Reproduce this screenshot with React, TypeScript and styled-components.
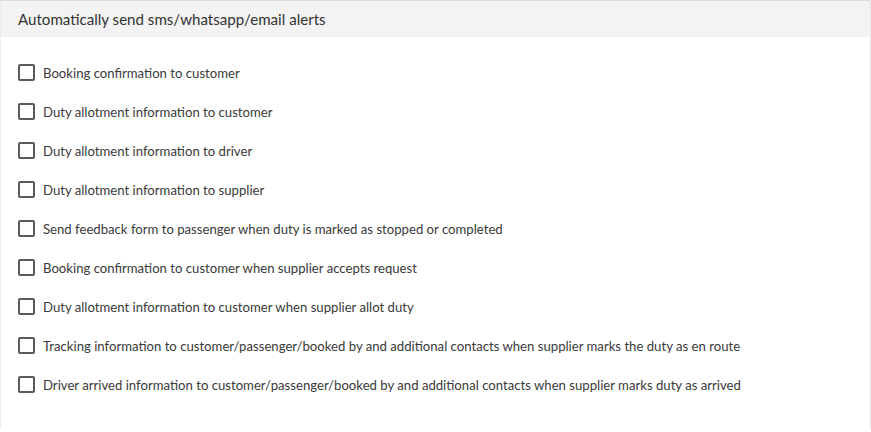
import React from "react";
import styled, { createGlobalStyle } from "styled-components";

const Global = createGlobalStyle`
  html, body { margin: 0; padding: 0; background: #ffffff; }
  body { font-family: Lato, "Open Sans", sans-serif; }
`;

const Card = styled.section`
  width: 870px;
  height: 429px;
  box-sizing: border-box;
  background: #fff;
  border-top: 1px solid #dcdcdc;
  border-left: 1px solid #ececec;
  box-shadow: 0 1px 2px 1px rgba(0, 0, 0, 0.14);
  display: flex;
  flex-direction: column;
`;

const Header = styled.header`
  height: 36px;
  background: #f3f3f3;
  display: flex;
  align-items: center;
  padding-left: 17px;
  font-size: 15.1px;
  color: #333;
`;

const List = styled.div`
  display: flex;
  flex-direction: column;
  padding: 16px 0 0 17px;
`;

const Row = styled.label`
  height: 39px;
  display: flex;
  align-items: center;
  gap: 8px;
  font-size: 13.15px;
  color: #3a3a3a;
  cursor: pointer;
`;

const Box = styled.span`
  width: 17px;
  height: 17px;
  box-sizing: border-box;
  border: 2px solid #5a5a5a;
  border-radius: 2px;
  background: #fff;
  flex: none;
`;

const items = [
  "Booking confirmation to customer",
  "Duty allotment information to customer",
  "Duty allotment information to driver",
  "Duty allotment information to supplier",
  "Send feedback form to passenger when duty is marked as stopped or completed",
  "Booking confirmation to customer when supplier accepts request",
  "Duty allotment information to customer when supplier allot duty",
  "Tracking information to customer/passenger/booked by and additional contacts when supplier marks the duty as en route",
  "Driver arrived information to customer/passenger/booked by and additional contacts when supplier marks duty as arrived",
];

export default function App() {
  return (
    <>
      <Global />
      <Card>
        <Header>Automatically send sms/whatsapp/email alerts</Header>
        <List>
          {items.map((t) => (
            <Row key={t}>
              <Box />
              {t}
            </Row>
          ))}
        </List>
      </Card>
    </>
  );
}
